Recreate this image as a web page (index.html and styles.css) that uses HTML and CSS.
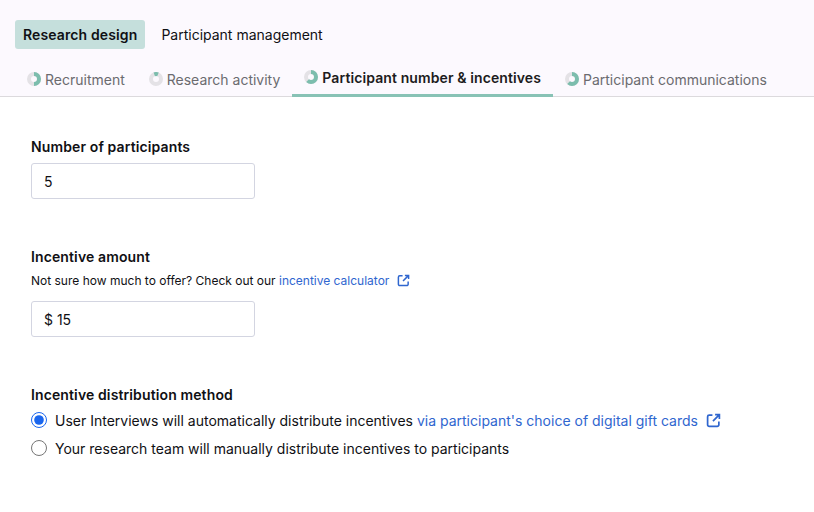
FILE: index.html
```html
<!DOCTYPE html>
<html lang="en">
<head>
<meta charset="utf-8">
<title>Research design</title>
<link rel="stylesheet" href="styles.css">
</head>
<body>
<header class="header">
  <nav class="pills">
    <span class="pill pill-active">Research design</span>
    <span class="pill">Participant management</span>
  </nav>
  <nav class="tabs">
    <span class="tab">
      <svg class="ring" viewBox="0 0 14 14"><circle class="ring-bg" cx="7" cy="7" r="5"/><circle class="ring-fg" cx="7" cy="7" r="5" pathLength="100" stroke-dasharray="50 100" transform="rotate(-90 7 7)"/></svg>
      Recruitment
    </span>
    <span class="tab">
      <svg class="ring" viewBox="0 0 14 14"><circle class="ring-bg" cx="7" cy="7" r="5"/><circle class="ring-fg" cx="7" cy="7" r="5" pathLength="100" stroke-dasharray="12 100" transform="rotate(-110 7 7)"/></svg>
      Research activity
    </span>
    <span class="tab tab-active">
      <svg class="ring" viewBox="0 0 14 14"><circle class="ring-bg" cx="7" cy="7" r="5"/><circle class="ring-fg" cx="7" cy="7" r="5" pathLength="100" stroke-dasharray="62 100" transform="rotate(-90 7 7)"/></svg>
      Participant number &amp; incentives
    </span>
    <span class="tab">
      <svg class="ring" viewBox="0 0 14 14"><circle class="ring-bg" cx="7" cy="7" r="5"/><circle class="ring-fg" cx="7" cy="7" r="5" pathLength="100" stroke-dasharray="62 100" transform="rotate(-90 7 7)"/></svg>
      Participant communications
    </span>
  </nav>
</header>
<main class="form">
  <section class="field field-participants">
    <label class="label" for="count">Number of participants</label>
    <input class="input" id="count" type="text" value="5">
  </section>
  <section class="field field-incentive">
    <label class="label" for="amount">Incentive amount</label>
    <p class="help">Not sure how much to offer? Check out our <a class="link" href="#">incentive calculator<svg class="ext ext-small" viewBox="0 0 14 14"><path d="M6 2H3a1.5 1.5 0 0 0-1.5 1.500v7.500A1.500 1.500 0 0 0 3 12.500h7.500A1.500 1.500 0 0 0 12 11V8M8.500 1.500h4v4M12.500 1.500 6.500 7.500"/></svg></a></p>
    <input class="input" id="amount" type="text" value="$ 15">
  </section>
  <section class="field field-method">
    <span class="label">Incentive distribution method</span>
    <label class="radio-row"><input class="radio" type="radio" name="method" checked><span>User Interviews will automatically distribute incentives <a class="link" href="#">via participant's choice of digital gift cards<svg class="ext" viewBox="0 0 14 14"><path d="M6 2H3a1.5 1.5 0 0 0-1.5 1.500v7.500A1.500 1.500 0 0 0 3 12.500h7.500A1.500 1.500 0 0 0 12 11V8M8.500 1.500h4v4M12.500 1.500 6.500 7.500"/></svg></a></span></label>
    <label class="radio-row"><input class="radio" type="radio" name="method"><span>Your research team will manually distribute incentives to participants</span></label>
  </section>
</main>
</body>
</html>
```
FILE: styles.css
```css
* { box-sizing: border-box; }
html, body { margin: 0; padding: 0; }
body {
  width: 814px;
  height: 512px;
  overflow: hidden;
  background: #fff;
  color: #101014;
  font-family: Inter, "Liberation Sans", sans-serif;
  font-size: 14px;
}
.header {
  height: 97px;
  padding: 20px 0 0 15px;
  background: #fcf9fe;
  border-bottom: 1px solid #dcdadd;
}
.pills { display: flex; height: 29px; }
.pill {
  display: flex;
  align-items: center;
  padding: 0 8px;
  margin-right: 8px;
  border-radius: 3px;
  line-height: 29px;
}
.pill-active { background: #c5dfdc; font-weight: 600; letter-spacing: 0.12px; }
.tabs { display: flex; margin-top: 9px; height: 39px; }
.tab {
  display: flex;
  align-items: center;
  gap: 4px;
  height: 39px;
  padding: 10px 12px 4px;
  color: #6b6b6f;
  white-space: nowrap;
  border-bottom: 3px solid transparent;
}
.tab-active {
  color: #1c1c20;
  font-weight: 600;
  letter-spacing: 0.1px;
  padding-bottom: 8px;
  border-bottom-color: #88c2b5;
}
.ring { width: 14px; height: 14px; flex: none; fill: none; }
.ring-bg { stroke: #e4e2e6; stroke-width: 4; }
.ring-fg { stroke: #7cbdad; stroke-width: 4; }
.form { padding: 0 31px; }
.field { display: flex; flex-direction: column; align-items: flex-start; }
.field-participants { padding-top: 41px; }
.field-incentive { padding-top: 49px; }
.field-method { padding-top: 49px; }
.label { font-weight: 600; line-height: 18px; letter-spacing: 0.12px; }
.input {
  width: 224px;
  height: 36px;
  margin-top: 7px;
  padding: 0 12px;
  border: 1px solid #d3d5e1;
  border-radius: 3px;
  background: #fff;
  color: #101014;
  font: 14px Inter, "Liberation Sans", sans-serif;
}
.help { margin: 6px 0 4px; font-size: 12px; line-height: 18px; }
.link { color: #2f66cf; text-decoration: none; }
.ext {
  width: 15px;
  height: 15px;
  margin-left: 8px;
  vertical-align: -2px;
  fill: none;
  stroke: #2f66cf;
  stroke-width: 1.6;
}
.ext-small { width: 13px; height: 13px; }
.radio-row { display: flex; align-items: center; height: 28px; gap: 8px; }
.radio-row:first-of-type { margin-top: 2px; }
.radio { width: 16px; height: 16px; margin: 0; accent-color: #1a66ee; flex: none; }
```
